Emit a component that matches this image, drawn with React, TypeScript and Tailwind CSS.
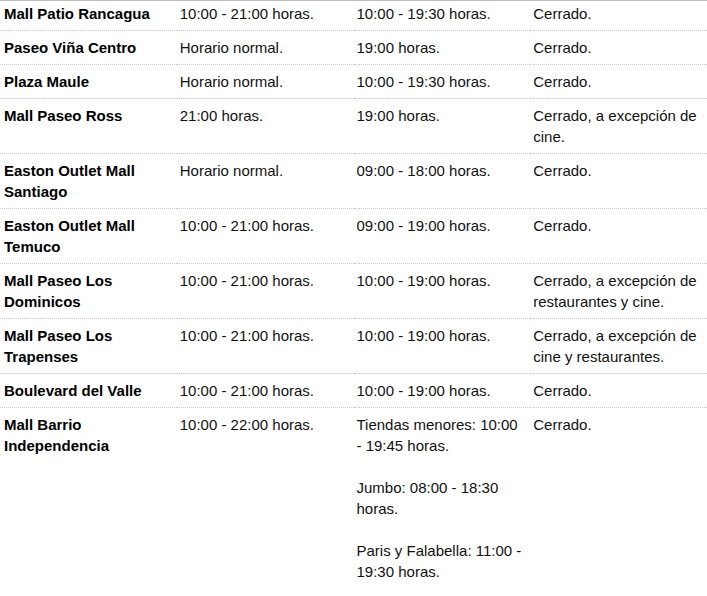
import React from 'react';

type Row = {
  name: string;
  a: string;
  b: string[];
  c: string;
};

const rows: Row[] = [
  { name: 'Mall Patio Rancagua', a: '10:00 - 21:00 horas.', b: ['10:00 - 19:30 horas.'], c: 'Cerrado.' },
  { name: 'Paseo Viña Centro', a: 'Horario normal.', b: ['19:00 horas.'], c: 'Cerrado.' },
  { name: 'Plaza Maule', a: 'Horario normal.', b: ['10:00 - 19:30 horas.'], c: 'Cerrado.' },
  { name: 'Mall Paseo Ross', a: '21:00 horas.', b: ['19:00 horas.'], c: 'Cerrado, a excepción de cine.' },
  { name: 'Easton Outlet Mall Santiago', a: 'Horario normal.', b: ['09:00 - 18:00 horas.'], c: 'Cerrado.' },
  { name: 'Easton Outlet Mall Temuco', a: '10:00 - 21:00 horas.', b: ['09:00 - 19:00 horas.'], c: 'Cerrado.' },
  { name: 'Mall Paseo Los Dominicos', a: '10:00 - 21:00 horas.', b: ['10:00 - 19:00 horas.'], c: 'Cerrado, a excepción de restaurantes y cine.' },
  { name: 'Mall Paseo Los Trapenses', a: '10:00 - 21:00 horas.', b: ['10:00 - 19:00 horas.'], c: 'Cerrado, a excepción de cine y restaurantes.' },
  { name: 'Boulevard del Valle', a: '10:00 - 21:00 horas.', b: ['10:00 - 19:00 horas.'], c: 'Cerrado.' },
  {
    name: 'Mall Barrio Independencia',
    a: '10:00 - 22:00 horas.',
    b: ['Tiendas menores: 10:00 - 19:45 horas.', 'Jumbo: 08:00 - 18:30 horas.', 'Paris y Falabella: 11:00 - 19:30 horas.'],
    c: 'Cerrado.',
  },
];

export default function App() {
  return (
    <div className="w-[707px] bg-white font-['Liberation_Sans',Arial,sans-serif] text-[15px] leading-[21px] text-[#111]">
      <table className="w-full table-fixed border-collapse border-t border-solid border-[#bbb]">
        <tbody>
          {rows.map((r, i) => {
            const pad = i === 0 ? 'pt-[2px] pb-[6px]' : 'py-[6px]';
            const line = i === rows.length - 1 ? '' : 'border-b border-dotted border-[#c8c8c8]';
            const cell = `align-top pl-[3px] pr-[4px] ${pad} ${line}`;
            return (
              <tr key={r.name}>
                <td className={`${cell} pl-[4px] font-bold text-black`}>{r.name}</td>
                <td className={cell}>{r.a}</td>
                <td className={cell}>
                  {r.b.map((t, j) => (
                    <p key={j} className={j > 0 ? 'mt-[21px]' : ''}>
                      {t}
                    </p>
                  ))}
                </td>
                <td className={cell}>{r.c}</td>
              </tr>
            );
          })}
        </tbody>
      </table>
    </div>
  );
}
